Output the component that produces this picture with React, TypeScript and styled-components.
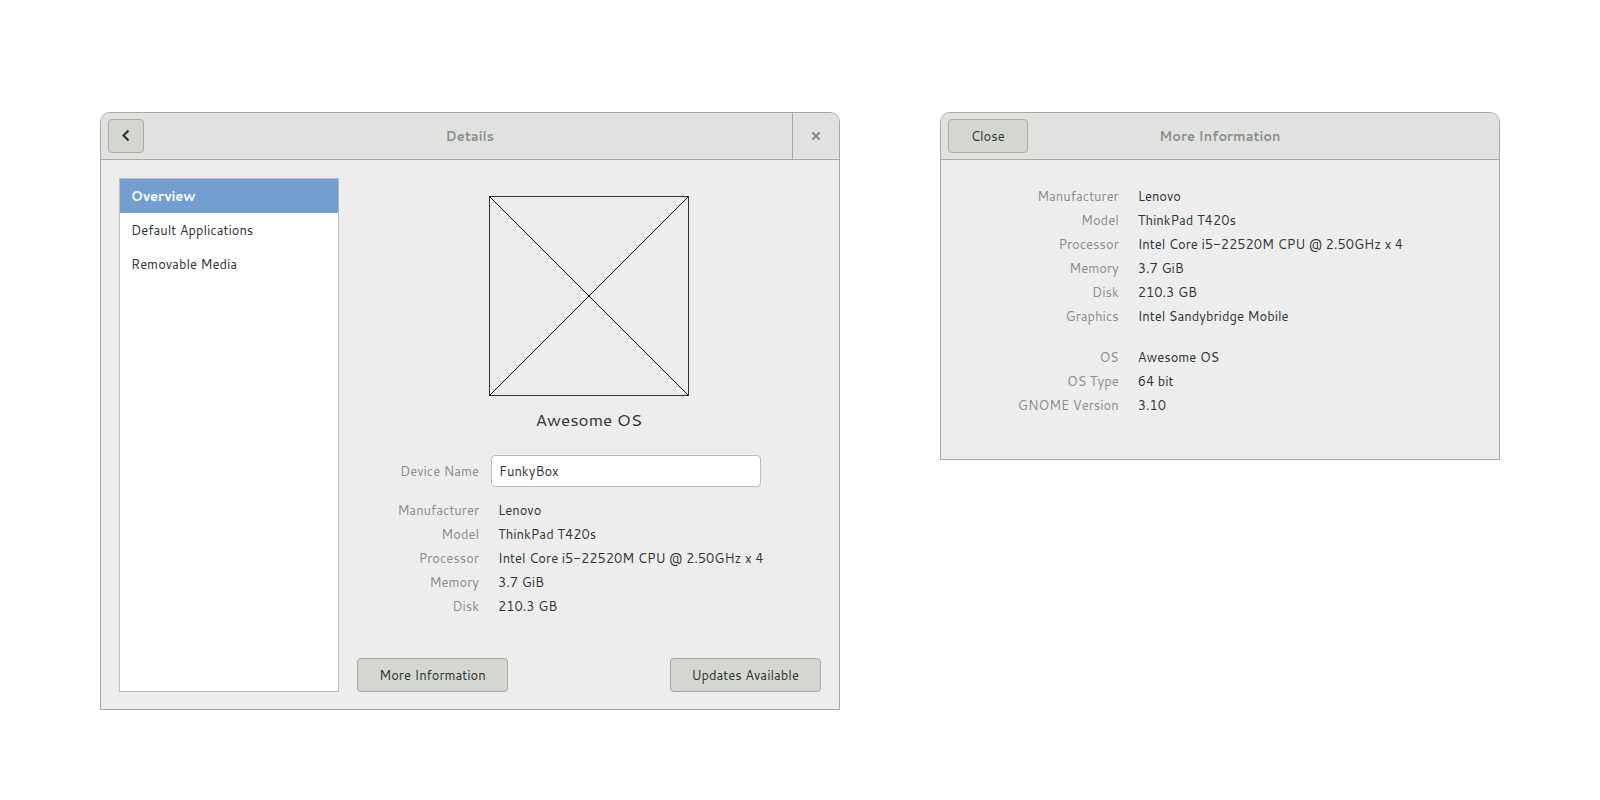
import React from "react";
import styled, { createGlobalStyle, css } from "styled-components";

const color = {
  border: "#a6a8a6",
  field: "#babcb8",
  header: "#e0e2df",
  surface: "#ededed",
  button: "#d4d7d0",
  text: "#2e3436",
  muted: "#8b8e8b",
  accent: "#729fcf",
};

const GlobalStyle = createGlobalStyle`
  *, *::before, *::after { box-sizing: border-box; }
  body {
    margin: 0;
    background: #fff;
    color: ${color.text};
    font-family: Cantarell, "Noto Sans", sans-serif;
    font-size: 13px;
    line-height: 24px;
  }
  button, input { font: inherit; color: inherit; }
`;

const Desktop = styled.div`
  display: flex;
  align-items: flex-start;
  gap: 100px;
  padding: 112px 100px;
`;

const Window = styled.section<{ $grow: number }>`
  flex: ${(p) => p.$grow} 1 0;
  min-width: 0;
  border: 1px solid ${color.border};
  border-radius: 10px 10px 0 0;
  background: ${color.surface};
  overflow: hidden;
`;

const HeaderBar = styled.header`
  display: grid;
  grid-template-columns: 1fr auto 1fr;
  align-items: center;
  height: 47px;
  padding-left: 7px;
  background: ${color.header};
  border-bottom: 1px solid ${color.border};
`;

const Title = styled.h1`
  margin: 0;
  padding-right: 7px;
  font-size: 13px;
  font-weight: bold;
  color: ${color.muted};
`;

const Button = styled.button<{ $width: number }>`
  display: inline-flex;
  align-items: center;
  justify-content: center;
  width: ${(p) => p.$width}px;
  height: 34px;
  padding: 0;
  border: 1px solid ${color.border};
  border-radius: 4px;
  background: ${color.button};
`;

const CloseButton = styled.button`
  justify-self: end;
  display: flex;
  align-items: center;
  justify-content: center;
  width: 47px;
  height: 46px;
  padding: 0;
  border: 0;
  border-left: 1px solid ${color.border};
  background: none;
`;

const Body = styled.div`
  display: flex;
  gap: 18px;
  padding: 18px 18px 17px;
`;

const Sidebar = styled.nav`
  flex: 0 0 220px;
  border: 1px solid ${color.field};
  background: #fff;
`;

const SidebarLink = styled.a<{ $active?: boolean }>`
  display: block;
  padding: 0 11px;
  line-height: 34px;
  color: inherit;
  text-decoration: none;
  ${(p) =>
    p.$active &&
    css`
      background: ${color.accent};
      color: #fff;
      font-weight: bold;
    `}
`;

const Overview = styled.main`
  flex: 1;
  min-width: 0;
  display: flex;
  flex-direction: column;
`;

const Logo = styled.svg`
  display: block;
  align-self: center;
  width: 200px;
  height: 200px;
  margin-top: 18px;
`;

const SystemName = styled.h2`
  margin: 11px 0 24px;
  font-size: 17px;
  font-weight: normal;
  text-align: center;
`;

const NameField = styled.div`
  display: grid;
  grid-template-columns: 122px minmax(0, 270px);
  column-gap: 12px;
  align-items: center;
  margin-bottom: 11px;
`;

const NameLabel = styled.label`
  color: ${color.muted};
  text-align: right;
`;

const NameInput = styled.input`
  width: 100%;
  height: 32px;
  padding: 0 7px;
  border: 1px solid ${color.field};
  border-radius: 4px;
  background: #fff;
`;

const Facts = styled.dl<{ $label: number }>`
  display: grid;
  grid-template-columns: ${(p) => p.$label}px 1fr;
  column-gap: 19px;
  margin: 0;
`;

const Term = styled.dt`
  color: ${color.muted};
  text-align: right;
`;

const Value = styled.dd`
  margin: 0;
`;

const Actions = styled.div`
  display: flex;
  justify-content: space-between;
  margin-top: 40px;
`;

const Information = styled.main`
  display: flex;
  flex-direction: column;
  gap: 17px;
  padding: 24px 18px 42px 0;
`;

type Fact = [string, string];

const hardware: Fact[] = [
  ["Manufacturer", "Lenovo"],
  ["Model", "ThinkPad T420s"],
  ["Processor", "Intel Core i5-22520M CPU @ 2.50GHz x 4"],
  ["Memory", "3.7 GiB"],
  ["Disk", "210.3 GB"],
];

const graphics: Fact = ["Graphics", "Intel Sandybridge Mobile"];

const software: Fact[] = [
  ["OS", "Awesome OS"],
  ["OS Type", "64 bit"],
  ["GNOME Version", "3.10"],
];

function FactList({ facts, label }: { facts: Fact[]; label: number }) {
  return (
    <Facts $label={label}>
      {facts.map(([term, value]) => (
        <React.Fragment key={term}>
          <Term>{term}</Term>
          <Value>{value}</Value>
        </React.Fragment>
      ))}
    </Facts>
  );
}

function DetailsWindow() {
  return (
    <Window $grow={740}>
      <HeaderBar>
        <Button $width={36} type="button" aria-label="Back">
          <svg width="16" height="16" viewBox="0 0 16 16" fill="none" stroke={color.text} strokeWidth="2.2">
            <path d="M10.5 2.5 5.5 7.5l5 5" />
          </svg>
        </Button>
        <Title>Details</Title>
        <CloseButton type="button" aria-label="Close window">
          <svg width="16" height="16" viewBox="0 0 16 16" fill="none" stroke={color.muted} strokeWidth="2.4">
            <path d="m4.5 4.5 7 7m0-7-7 7" />
          </svg>
        </CloseButton>
      </HeaderBar>
      <Body>
        <Sidebar>
          <SidebarLink href="#overview" $active aria-current="page">Overview</SidebarLink>
          <SidebarLink href="#applications">Default Applications</SidebarLink>
          <SidebarLink href="#media">Removable Media</SidebarLink>
        </Sidebar>
        <Overview>
          <Logo viewBox="0 0 200 200" fill="none" stroke="#000" aria-hidden="true">
            <path d="M.5.5l199 199M199.5.5l-199 199" />
            <rect x=".5" y=".5" width="199" height="199" stroke={color.text} />
          </Logo>
          <SystemName>Awesome OS</SystemName>
          <NameField>
            <NameLabel htmlFor="device-name">Device Name</NameLabel>
            <NameInput id="device-name" type="text" defaultValue="FunkyBox" />
          </NameField>
          <FactList facts={hardware} label={122} />
          <Actions>
            <Button $width={151} type="button">More Information</Button>
            <Button $width={151} type="button">Updates Available</Button>
          </Actions>
        </Overview>
      </Body>
    </Window>
  );
}

function InformationWindow() {
  return (
    <Window $grow={560}>
      <HeaderBar>
        <Button $width={80} type="button">Close</Button>
        <Title>More Information</Title>
      </HeaderBar>
      <Information>
        <FactList facts={[...hardware, graphics]} label={178} />
        <FactList facts={software} label={178} />
      </Information>
    </Window>
  );
}

export default function App() {
  return (
    <>
      <GlobalStyle />
      <Desktop>
        <DetailsWindow />
        <InformationWindow />
      </Desktop>
    </>
  );
}
